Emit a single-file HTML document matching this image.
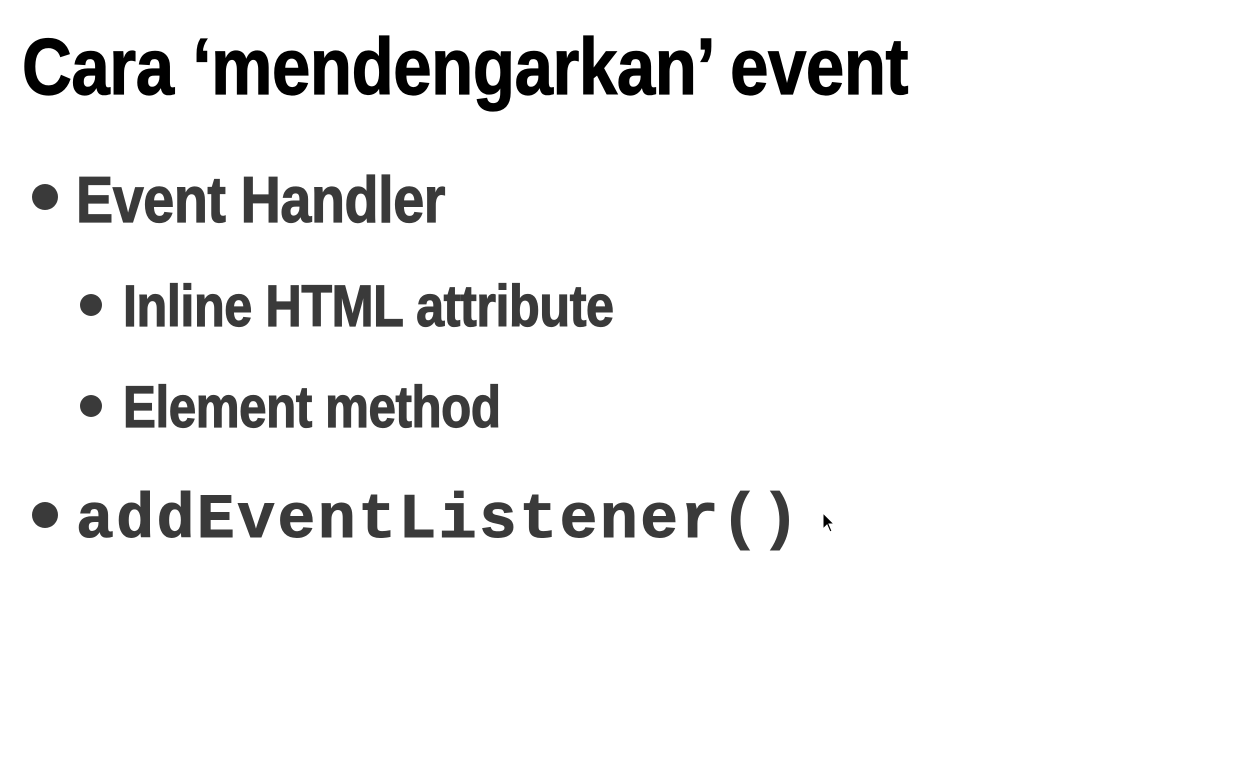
<!DOCTYPE html>
<html><head><meta charset="utf-8"><style>
html,body{margin:0;padding:0;background:#fff;width:1256px;height:772px;overflow:hidden;position:relative}
.t{position:absolute;white-space:nowrap;font-family:"Liberation Sans",sans-serif;font-weight:bold;transform:scaleX(0.85);transform-origin:0 0;letter-spacing:-0.5px;-webkit-text-stroke:1.2px currentColor}
.b{position:absolute;border-radius:50%;background:#3a3a3a}
</style></head><body>
<div class="t" style="left:22px;top:27px;font-size:80px;line-height:80px;color:#000;transform:scaleX(0.862)">Cara ‘mendengarkan’ event</div>
<div class="b" style="left:32px;top:184px;width:26px;height:26px"></div>
<div class="t" style="left:76px;top:167px;font-size:65px;line-height:65px;color:#3a3a3a;transform:scaleX(0.857)">Event Handler</div>
<div class="b" style="left:80px;top:294px;width:22px;height:22px"></div>
<div class="t" style="left:123px;top:278px;font-size:58px;line-height:58px;color:#3a3a3a;transform:scaleX(0.868)">Inline HTML attribute</div>
<div class="b" style="left:80px;top:395px;width:22px;height:22px"></div>
<div class="t" style="left:123px;top:379px;font-size:58px;line-height:58px;color:#3a3a3a">Element method</div>
<div class="b" style="left:32px;top:502px;width:26px;height:26px"></div>
<div style="position:absolute;left:76px;top:489px;font-family:'Liberation Mono',monospace;font-weight:bold;font-size:63px;line-height:63px;color:#3a3a3a;white-space:nowrap;letter-spacing:2.5px;-webkit-text-stroke:1px #3a3a3a">addEventListener()</div>
<svg style="position:absolute;left:822px;top:512px" width="14" height="22" viewBox="0 0 14 22"><path d="M1 1 L1 17 L5 13 L8 20 L10 19 L7 12 L12 12 Z" fill="#000" stroke="#fff" stroke-width="1"/></svg>
</body></html>
